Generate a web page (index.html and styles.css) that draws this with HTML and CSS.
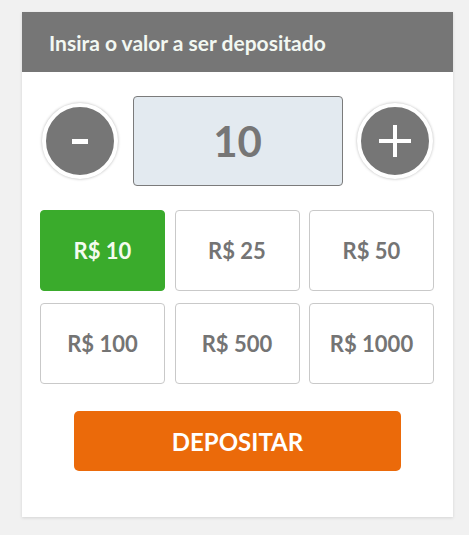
FILE: index.html
```html
<!DOCTYPE html>
<html lang="pt-BR">
<head>
<meta charset="utf-8">
<title>Depósito</title>
<link rel="stylesheet" href="styles.css">
</head>
<body>
<div class="card">
  <div class="card-header">Insira o valor a ser depositado</div>
  <div class="card-body">
    <div class="stepper">
      <button class="round-btn" aria-label="-">
        <svg width="16" height="5" viewBox="0 0 16 5"><rect width="16" height="5" fill="#fff"/></svg>
      </button>
      <div class="amount-input">10</div>
      <button class="round-btn" aria-label="+">
        <svg width="32" height="32" viewBox="0 0 32 32"><rect x="0" y="14" width="32" height="4" fill="#fff"/><rect x="14" y="0" width="4" height="32" fill="#fff"/></svg>
      </button>
    </div>
    <div class="amounts">
      <button class="amount active">R$ 10</button>
      <button class="amount">R$ 25</button>
      <button class="amount">R$ 50</button>
      <button class="amount">R$ 100</button>
      <button class="amount">R$ 500</button>
      <button class="amount">R$ 1000</button>
    </div>
    <div class="actions">
      <button class="deposit">DEPOSITAR</button>
    </div>
  </div>
</div>
</body>
</html>
```
FILE: styles.css
```css
html, body {
  margin: 0;
  padding: 0;
}
body {
  background: #f1f1f1;
  font-family: Lato, "Open Sans", sans-serif;
  padding: 12px 16px 18px 22px;
}
.card {
  width: 431px;
  background: #fff;
  box-shadow: 0 1px 3px rgba(0, 0, 0, 0.12);
}
.card-header {
  height: 60px;
  background: #767676;
  color: #f2f8f2;
  font-weight: 700;
  font-size: 21px;
  display: flex;
  align-items: center;
  padding-left: 27px;
}
.card-body {
  padding: 24px 18px 46px 18px;
}
.stepper {
  display: flex;
  align-items: center;
  justify-content: space-between;
  padding: 0 2px;
}
.round-btn {
  box-sizing: border-box;
  width: 76px;
  height: 76px;
  border-radius: 50%;
  border: 4px solid #fff;
  background: #767676;
  box-shadow: 0 0 3px rgba(0, 0, 0, 0.3);
  padding: 0;
  display: flex;
  align-items: center;
  justify-content: center;
}
.round-btn svg {
  display: block;
}
.amount-input {
  box-sizing: border-box;
  width: 210px;
  height: 90px;
  background: #e3eaf0;
  border: 1px solid #7b7b7b;
  border-radius: 4px;
  color: #767676;
  font-size: 42px;
  font-weight: 700;
  display: flex;
  align-items: center;
  justify-content: center;
}
.amounts {
  margin-top: 24px;
  display: grid;
  grid-template-columns: repeat(3, 125px);
  grid-auto-rows: 81px;
  column-gap: 9.5px;
  row-gap: 12px;
}
.amount {
  box-sizing: border-box;
  background: #fff;
  border: 1px solid #c9c9c9;
  border-radius: 4px;
  font-family: Lato, "Open Sans", sans-serif;
  font-weight: 700;
  font-size: 22px;
  color: #747474;
  padding: 0;
}
.amount.active {
  background: #3aab2c;
  border-color: #3aab2c;
  color: #f4fbef;
}
.actions {
  margin-top: 27px;
  display: flex;
  justify-content: center;
}
.deposit {
  width: 327px;
  height: 60px;
  background: #eb6a0a;
  border: none;
  border-radius: 5px;
  color: #fff;
  font-family: Lato, "Open Sans", sans-serif;
  font-weight: 700;
  font-size: 24px;
  padding: 0;
}
```
